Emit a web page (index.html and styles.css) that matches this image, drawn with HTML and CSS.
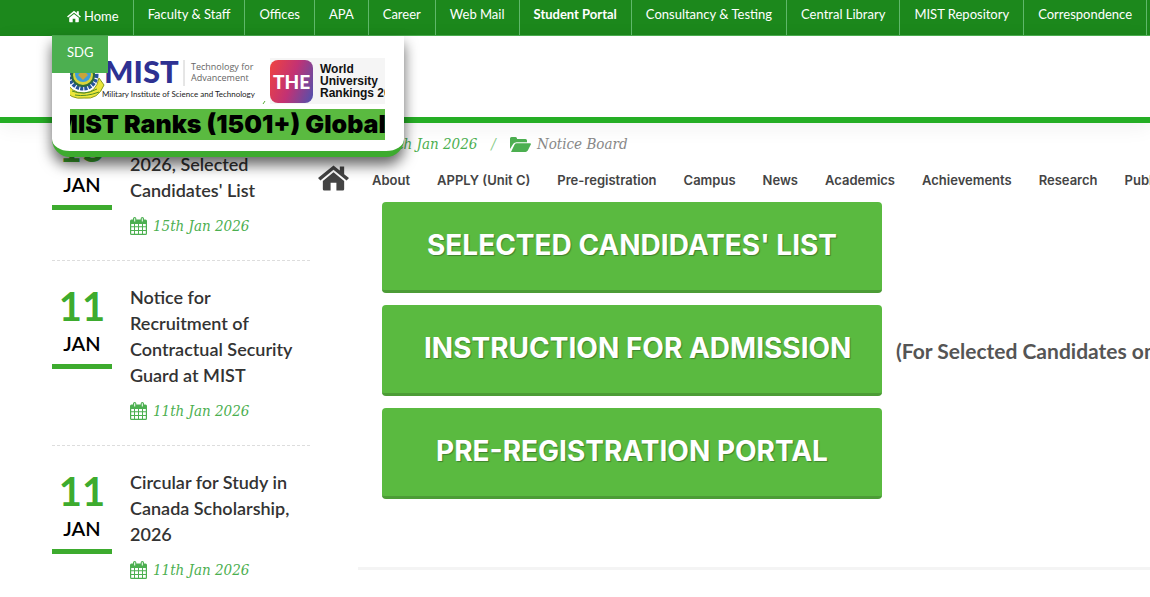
FILE: index.html
```html
<!DOCTYPE html>
<html lang="en">
<head>
<meta charset="UTF-8" />
<meta name="viewport" content="width=device-width, initial-scale=1" />
<title>MIST - Notice Board</title>
<link rel="stylesheet" href="styles.css">
</head>
<body>

<!-- shared icons -->
<svg class="sprite" aria-hidden="true">
  <symbol id="icon-home" viewBox="0 0 32 26">
    <path d="M16 0 L0 13 L2.5 15.5 L16 4.6 L29.5 15.5 L32 13 L27 9 V1 H22.5 V5.2 Z" />
    <path d="M16 7 L5 16 V24.5 Q5 26 6.500 26 H13 V18 H19 V26 H25.500 Q27 26 27 24.500 V16 Z" />
  </symbol>
  <symbol id="icon-calendar" viewBox="0 0 17 18">
    <path fill-rule="evenodd" d="M1.500 2.500 H3 V1.500 Q3 0 4.700 0 Q6.300 0 6.300 1.500 V2.500 H10.700 V1.500 Q10.700 0 12.300 0 Q14 0 14 1.500 V2.500 H15.500 Q17 2.500 17 4 V16.500 Q17 18 15.500 18 H1.500 Q0 18 0 16.500 V4 Q0 2.500 1.500 2.500 Z
      M1.200 7 V9.200 H4 V7 Z M5 7 V9.200 H8 V7 Z M9 7 V9.200 H12 V7 Z M13 7 V9.200 H15.800 V7 Z
      M1.200 10.200 V13 H4 V10.200 Z M5 10.200 V13 H8 V10.200 Z M9 10.200 V13 H12 V10.200 Z M13 10.200 V13 H15.800 V10.200 Z
      M1.200 14 V16.800 H4 V14 Z M5 14 V16.800 H8 V14 Z M9 14 V16.800 H12 V14 Z M13 14 V16.800 H15.800 V14 Z
      M4.200 1.200 V4.500 H5.200 V1.200 Z M11.800 1.200 V4.500 H12.800 V1.200 Z" />
  </symbol>
  <symbol id="icon-folder" viewBox="0 0 21 15">
    <path d="M0 12 V1.500 Q0 0 1.500 0 H5.500 Q7 0 7 1.500 V2 H15.500 Q17 2 17 3.500 V5.200 H6.500 Q4.500 5.200 3.300 6.800 Z" />
    <path d="M1 15 L4.600 7.600 Q5.200 6.300 6.800 6.300 H20 Q21.400 6.300 20.800 7.500 L17.800 13.600 Q17 15 15.500 15 Z" />
  </symbol>
</svg>

<header class="site-header">
  <nav class="topbar">
    <ul>
      <li class="home"><a href="#"><svg><use href="#icon-home" /></svg>Home</a></li>
      <li><a href="#">Faculty &amp; Staff</a></li>
      <li><a href="#">Offices</a></li>
      <li><a href="#">APA</a></li>
      <li><a href="#">Career</a></li>
      <li><a href="#">Web Mail</a></li>
      <li><a href="#"><b>Student Portal</b></a></li>
      <li><a href="#">Consultancy &amp; Testing</a></li>
      <li><a href="#">Central Library</a></li>
      <li><a href="#">MIST Repository</a></li>
      <li><a href="#">Correspondence</a></li>
    </ul>
    <a href="#" class="sdg">SDG</a>
  </nav>

  <div class="brand-bar"></div>

  <div class="logo-card">
    <div class="logos">
      <svg class="mist-logo" width="196" height="46" viewBox="0 0 196 46" role="img" aria-label="MIST">
        <path d="M-4 22 Q0 35 14 35 Q26 35 29 20 L34 27 Q28 42 14 40 Q0 42 -6 30 Z" fill="#ece63a" stroke="#8a9a1e" />
        <circle cx="13" cy="17" r="13" fill="none" stroke="#27549b" stroke-width="5" stroke-dasharray="3 1" />
        <circle cx="13" cy="17" r="11" fill="#d9d53a" stroke="#2d6b3c" stroke-width="2" />
        <circle cx="13" cy="16" r="8" fill="#3f9ed8" />
        <path d="M8 17 L13 12 L18 17 L13 22 Z" fill="#c9a43a" />
        <path d="M2 33 Q14 38 27 31 M5 37 Q16 39 29 34" fill="none" stroke="#4d8c28" />
        <text class="mist-name" x="34" y="25">MIST</text>
        <path d="M114 2 V28" stroke="#ccc" />
        <text class="mist-tag" x="121" y="12">Technology for</text>
        <text class="mist-tag" x="121" y="23">Advancement</text>
        <text class="mist-full" x="32" y="39">Military Institute of Science and Technology</text>
        <path d="M193 46 L195 43" stroke="#5a3" />
      </svg>
      <div class="rankings">
        <span class="the">THE</span>
        <span class="the-text">World<br>University<br>Rankings 2026</span>
      </div>
    </div>
    <div class="ticker"><span>MIST Ranks (1501+) Globally</span></div>
  </div>
</header>

<main>
  <aside>
    <article class="notice">
      <div class="date"><b>15</b><span>JAN</span></div>
      <div class="info">
        <h4><a href="#"><br>2026, Selected Candidates' List</a></h4>
        <p class="posted"><svg class="calendar"><use href="#icon-calendar" /></svg>15th Jan 2026</p>
      </div>
    </article>
    <article class="notice">
      <div class="date"><b>11</b><span>JAN</span></div>
      <div class="info">
        <h4><a href="#">Notice for Recruitment of Contractual Security Guard at MIST</a></h4>
        <p class="posted"><svg class="calendar"><use href="#icon-calendar" /></svg>11th Jan 2026</p>
      </div>
    </article>
    <article class="notice">
      <div class="date"><b>11</b><span>JAN</span></div>
      <div class="info">
        <h4><a href="#">Circular for Study in Canada Scholarship, 2026</a></h4>
        <p class="posted"><svg class="calendar"><use href="#icon-calendar" /></svg>11th Jan 2026</p>
      </div>
    </article>
  </aside>

  <section class="content">
    <p class="posted meta">
      <svg class="calendar"><use href="#icon-calendar" /></svg>15th Jan 2026
      <span class="slash">/</span>
      <svg class="folder"><use href="#icon-folder" /></svg><a href="#">Notice Board</a>
    </p>

    <nav class="main-menu">
      <a href="#" class="menu-home" aria-label="Home"><svg><use href="#icon-home" /></svg></a>
      <a href="#">About</a>
      <a href="#">APPLY (Unit C)</a>
      <a href="#">Pre-registration</a>
      <a href="#">Campus</a>
      <a href="#">News</a>
      <a href="#">Academics</a>
      <a href="#">Achievements</a>
      <a href="#">Research</a>
      <a href="#">Publications</a>
    </nav>

    <div class="buttons">
      <div class="button-row"><a href="#" class="btn">SELECTED CANDIDATES' LIST</a></div>
      <div class="button-row"><a href="#" class="btn">INSTRUCTION FOR ADMISSION</a><strong>(For Selected Candidates only)</strong></div>
      <div class="button-row"><a href="#" class="btn">PRE-REGISTRATION PORTAL</a></div>
    </div>
    <hr>
  </section>
</main>

</body>
</html>
```
FILE: styles.css
```css
* {
  box-sizing: border-box;
}

body {
  margin: 0;
  font-family: Lato, "Liberation Sans", sans-serif;
  background: #fff;
  color: #333;
  overflow-x: hidden;
}

a {
  color: inherit;
  text-decoration: none;
}

svg {
  fill: currentColor;
}

.sprite {
  display: none;
}

/* header */
.site-header {
  position: relative;
  z-index: 2;
}

.topbar {
  background: #1c881c;
  color: #fff;
  font-size: 13px;
  padding-left: 52px;
}

.topbar ul {
  display: flex;
  list-style: none;
  margin: 0;
  padding: 0;
  overflow: hidden;
  border-bottom: 1px solid #4caf50;
}

.topbar li {
  flex: none;
  height: 35px;
  padding: 0 14px;
  line-height: 28px;
  border-right: 1px solid #5fb86a;
  white-space: nowrap;
}

.topbar .home {
  padding-left: 15px;
  line-height: 32px;
}

.topbar .home svg {
  width: 14px;
  height: 13px;
  margin-right: 3px;
  vertical-align: -2px;
}

.sdg {
  position: absolute;
  z-index: 2;
  top: 36px;
  left: 52px;
  padding: 0 15px;
  line-height: 32px;
  height: 37px;
  background: #4caf50;
}

.brand-bar {
  height: 87px;
  background: #fff;
  border-bottom: 6px solid #25ae25;
  box-shadow: 0 4px 20px rgba(0, 0, 0, 0.06);
}

.logo-card {
  position: absolute;
  top: 36px;
  left: 52px;
  width: 352px;
  padding: 22px 19px 11px 18px;
  background: #fff;
  border-bottom: 6px solid #3dab2e;
  border-radius: 0 0 18px 18px;
  box-shadow: 0 8px 14px rgba(0, 0, 0, 0.6);
}

.logos {
  display: flex;
  height: 46px;
  overflow: hidden;
}

.mist-logo {
  flex: none;
}

.mist-name {
  font-family: Lato, sans-serif;
  font-size: 31px;
  font-weight: 900;
  fill: #2e3192;
}

.mist-tag {
  font-family: "Open Sans", sans-serif;
  font-size: 9px;
  fill: #666;
}

.mist-full {
  font-family: Lato, sans-serif;
  font-size: 8px;
  fill: #222;
}

.rankings {
  display: flex;
  align-items: center;
  margin-left: 4px;
  background: #f5f5f5;
  overflow: hidden;
}

.the {
  flex: none;
  width: 43px;
  height: 43px;
  border-radius: 8px;
  background: linear-gradient(110deg, #f0433f, #c23274 50%, #4c52b0);
  color: #fff;
  font: 900 19px/43px Lato, sans-serif;
  text-align: center;
}

.the-text {
  margin-left: 7px;
  font: bold 12px/12px "Liberation Sans", sans-serif;
  color: #111;
  white-space: nowrap;
}

.ticker {
  height: 31px;
  margin-top: 5px;
  background: #5aba40;
  overflow: hidden;
}

.ticker span {
  display: block;
  margin-left: -16px;
  font: 900 25px/31px Inter, sans-serif;
  color: #000;
  white-space: nowrap;
}

/* page */
main {
  display: flex;
  padding: 2px 0 0 52px;
}

aside {
  flex: none;
  width: 258px;
}

.notice {
  display: flex;
  gap: 18px;
  padding-bottom: 20px;
  margin-bottom: 23px;
  border-bottom: 1px dashed #ddd;
}

.notice:last-child {
  border-bottom: 0;
  margin-bottom: 0;
  padding-bottom: 0;
}

.date {
  flex: none;
  width: 60px;
  height: 85px;
  text-align: center;
  border-bottom: 5px solid #3dab2e;
}

.date b {
  display: block;
  font-size: 40px;
  line-height: 44px;
  color: #3dab2e;
}

.date span {
  display: block;
  font-size: 20px;
  font-weight: 600;
  line-height: 30px;
  color: #000;
}

.notice h4 {
  margin: 0 0 9px;
  font-size: 18px;
  font-weight: 600;
  line-height: 26px;
}

.posted {
  display: flex;
  align-items: center;
  margin: 0;
  height: 28px;
  font: italic 15px/28px "DejaVu Serif Condensed", "DejaVu Serif", serif;
  color: #4caf50;
}

.calendar {
  width: 17px;
  height: 18px;
  margin-right: 6px;
}

.content {
  flex: 1;
  min-width: 0;
  padding-left: 8px;
}

.meta {
  margin: 5px 0 0 40px;
}

.slash {
  margin: 0 14px;
  color: #8c8;
}

.folder {
  width: 21px;
  height: 15px;
  margin-right: 6px;
}

.meta a {
  color: #888;
}

.main-menu {
  display: flex;
  align-items: center;
  height: 44px;
  overflow: hidden;
  font: 600 13px/20px Inter, sans-serif;
  color: #444;
  white-space: nowrap;
}

.main-menu a {
  margin-right: 27px;
}

.main-menu .menu-home {
  margin-right: 23px;
  padding-bottom: 5px;
}

.main-menu svg {
  display: block;
  width: 31px;
  height: 26px;
}

.buttons {
  display: flex;
  flex-direction: column;
  gap: 12px;
  padding-left: 64px;
}

.button-row {
  display: flex;
  align-items: center;
  gap: 14px;
}

.btn {
  flex: none;
  width: 500px;
  height: 91px;
  padding: 0 42px;
  background: #5aba40;
  border-bottom: 3px solid #4c9c36;
  border-radius: 4px;
  font: bold 28px/86px Inter, sans-serif;
  color: #fff;
  text-align: center;
  text-shadow: 1px 1px 1px rgba(0, 0, 0, 0.3);
  white-space: nowrap;
}

.button-row strong {
  font-size: 21px;
  color: #555;
  white-space: nowrap;
}

.content hr {
  margin: 68px 0 0 40px;
  border: 0;
  border-top: 3px solid #f4f4f4;
}
```
